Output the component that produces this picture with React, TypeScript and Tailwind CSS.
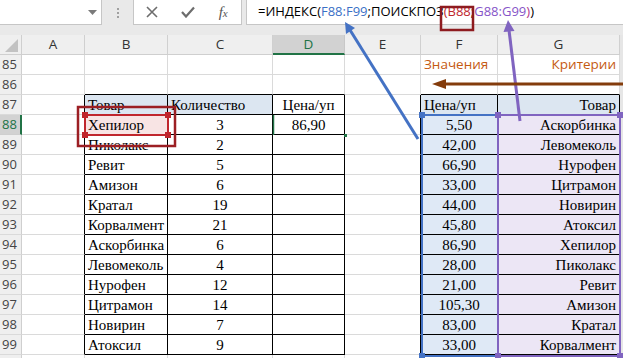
import React from "react";

const SERIF = "font-['Liberation_Serif','Times_New_Roman',serif]";
const SANS = "font-['Open_Sans','Noto_Sans',sans-serif]";

type Cell = { t?: string; a?: "l" | "c" | "r"; sans?: boolean; color?: string; bg?: string };

const B = ["Товар", "Хепилор", "Пиколакс", "Ревит", "Амизон", "Кратал", "Корвалмент", "Аскорбинка", "Левомеколь", "Нурофен", "Цитрамон", "Новирин", "Атоксил"];
const C = ["Количество", "3", "2", "5", "6", "19", "21", "6", "4", "12", "14", "7", "9"];
const F = ["Цена/уп", "5,50", "42,00", "66,90", "33,00", "44,00", "45,80", "86,90", "28,00", "21,00", "105,30", "83,00", "33,00"];
const G = ["Товар", "Аскорбинка", "Левомеколь", "Нурофен", "Цитрамон", "Новирин", "Атоксил", "Хепилор", "Пиколакс", "Ревит", "Амизон", "Кратал", "Корвалмент"];

function rowCells(r: number): Cell[] {
  const cells: Cell[] = Array.from({ length: 7 }, () => ({}));
  if (r === 85) {
    cells[5] = { t: "Значения", a: "l", sans: true, color: "o" };
    cells[6] = { t: "Критерии", a: "r", sans: true, color: "o" };
  }
  if (r >= 87 && r <= 99) {
    const i = r - 87;
    cells[1] = { t: B[i], a: "l", bg: i === 0 ? "h" : i === 1 ? "red" : undefined };
    cells[2] = { t: C[i], a: i === 0 ? "l" : "c", bg: i === 0 ? "h" : undefined };
    if (i === 0) cells[3] = { t: "Цена/уп", a: "c" };
    if (i === 1) cells[3] = { t: "86,90", a: "c" };
    cells[5] = { t: F[i], a: i === 0 ? "l" : "c", bg: i === 0 ? "h" : "blue" };
    cells[6] = { t: G[i], a: "r", bg: i === 0 ? "h" : "purple" };
  }
  return cells;
}

function bgClass(bg?: string) {
  if (bg === "h") return "bg-[#dce6f1]";
  if (bg === "red") return "bg-[#f8e4e4]";
  if (bg === "blue") return "bg-[#dfe9f6]";
  if (bg === "purple") return "bg-[#ece6f5]";
  return "bg-white";
}

function alignClass(a?: string) {
  if (a === "c") return "justify-center";
  if (a === "r") return "justify-end";
  return "justify-start";
}

function DataRow({ r }: { r: number }) {
  const cells = rowCells(r);
  const active = r === 88;
  return (
    <>
      <div
        className={
          active
            ? `h-[20px] border-b border-r-2 border-b-[#cfcfcf] border-r-[#217346] bg-[#d2d2d2] text-[#217346] ${SANS} text-[13px] flex items-center pl-[2px]`
            : `h-[20px] border-b border-r border-b-[#dadada] border-r-[#cfcfcf] bg-[#efefef] text-[#444] ${SANS} text-[13px] flex items-center pl-[2px]`
        }
      >
        {r < 100 ? r : ""}
      </div>
      {cells.map((c, ci) => {
        const inTableRows = r >= 87 && r <= 99;
        const rightBlack = inTableRows;
        const bottomBlack = r >= 86 && r <= 99 && (ci === 1 || ci === 2 || ci === 3 || ci === 5 || ci === 6);
        const cls = [
          "h-[20px] border-r border-b flex items-center px-[3px] overflow-hidden whitespace-nowrap",
          rightBlack ? "border-r-black" : "border-r-[#dadada]",
          bottomBlack ? "border-b-black" : "border-b-[#dadada]",
          bgClass(c.bg),
          alignClass(c.a),
          c.sans ? `${SANS} text-[13.5px] text-[#c55a11]` : `${SERIF} text-[15px] text-black`,
        ].join(" ");
        return (
          <div key={ci} className={cls}>
            <span className={c.sans ? "" : "pt-[2px]"}>{c.t}</span>
          </div>
        );
      })}
      <div className="h-[20px] bg-[#e6e6e6]" />
    </>
  );
}

export default function App() {
  const rows = Array.from({ length: 16 }, (_, i) => 85 + i);
  return (
    <div className="relative w-[623px] h-[358px] overflow-hidden bg-[#e9e9e9]">
      {/* formula bar */}
      <div className="h-[35px] flex items-start gap-0">
        <div className="relative w-[102px] h-[25px] bg-white border border-[#c6c6c6] border-l-0 border-t-0">
          <svg className="absolute left-[88px] top-[10px]" width="9" height="6" viewBox="0 0 9 6">
            <polygon points="0,0 9,0 4.5,5" fill="#7a7a7a" />
          </svg>
        </div>
        <div className="w-[31px] h-[25px] flex flex-col items-center justify-center gap-[2px]">
          <div className="w-[2px] h-[2px] bg-[#a0a0a0]" />
          <div className="w-[2px] h-[2px] bg-[#a0a0a0]" />
          <div className="w-[2px] h-[2px] bg-[#a0a0a0]" />
        </div>
        <div className="w-[109px] h-[25px] bg-white border border-[#c6c6c6] border-t-0 flex items-center">
          <div className="w-[36px] flex justify-center">
            <svg width="12" height="12" viewBox="0 0 12 12">
              <path d="M1 1 L11 11 M11 1 L1 11" stroke="#6d6d6d" strokeWidth="1.6" />
            </svg>
          </div>
          <div className="w-[36px] flex justify-center">
            <svg width="14" height="12" viewBox="0 0 14 12">
              <path d="M1 6 L5 10.5 L13 1.5" stroke="#6d6d6d" strokeWidth="2.2" fill="none" />
            </svg>
          </div>
          <div className="w-[36px] flex justify-center">
            <span className={`${SERIF} italic text-[15px] text-[#555] leading-none`}>
              f<span className="text-[11px]">x</span>
            </span>
          </div>
        </div>
        <div className="ml-[4px] flex-1 h-[25px] bg-white border border-[#c6c6c6] border-t-0 border-r-0 flex items-center pl-[11px]">
          <span className={`${SANS} text-[13px] text-black whitespace-nowrap`}>
            =ИНДЕКС(<span className="text-[#3a6fc6]">F88:F99</span>;ПОИСКПОЗ
            <span className="text-[#c0262d]">(B88</span>;
            <span className="text-[#8654c8]">G88:G99</span>
            <span className="text-[#b0368a]">)</span>)
          </span>
        </div>
      </div>

      {/* sheet */}
      <div className="grid grid-cols-[22px_63px_83px_105px_72px_76px_77px_122px_1fr]">
        <div className="h-[20px] bg-[#efefef] border-r border-b border-r-[#cfcfcf] border-b-[#cfcfcf] relative">
          <svg className="absolute left-[5px] top-[4px]" width="13" height="13" viewBox="0 0 13 13">
            <polygon points="13,0 13,13 0,13" fill="#c2c2c2" />
          </svg>
        </div>
        {["A", "B", "C", "D", "E", "F", "G"].map((l) =>
          l === "D" ? (
            <div
              key={l}
              className={`h-[20px] bg-[#d2d2d2] border-r border-b-2 border-r-[#c8c8c8] border-b-[#217346] flex items-center justify-center ${SANS} text-[13.5px] text-[#217346]`}
            >
              {l}
            </div>
          ) : (
            <div
              key={l}
              className={`h-[20px] bg-[#efefef] border-r border-b border-r-[#d0d0d0] border-b-[#cfcfcf] flex items-center justify-center ${SANS} text-[13.5px] text-[#333]`}
            >
              {l}
            </div>
          )
        )}
        <div className="h-[20px] bg-[#e6e6e6]" />
        {rows.map((r) => (
          <DataRow key={r} r={r} />
        ))}
      </div>

      {/* overlays: selection ranges, annotations and arrows */}
      <svg className="absolute inset-0 pointer-events-none" width="623" height="358" viewBox="0 0 623 358">
        <line x1="273.5" y1="115" x2="273.5" y2="135" stroke="#217346" strokeWidth="1.5" />
        <rect x="344" y="134" width="3" height="3" fill="#217346" />

        <rect x="422" y="115" width="76" height="241" fill="none" stroke="#4472c4" strokeWidth="2" />
        <rect x="498" y="115" width="122" height="241" fill="none" stroke="#8064c0" strokeWidth="2" />
        <rect x="419" y="112" width="6" height="6" fill="#4472c4" />
        <rect x="419" y="353" width="6" height="6" fill="#4472c4" />
        <rect x="495" y="112" width="6" height="6" fill="#8064c0" />
        <rect x="617" y="112" width="6" height="6" fill="#8064c0" />
        <rect x="495" y="353" width="6" height="6" fill="#8064c0" />
        <rect x="617" y="353" width="6" height="6" fill="#8064c0" />

        <rect x="85" y="115" width="83" height="20" fill="none" stroke="#c0262d" strokeWidth="2" />
        <rect x="82" y="112" width="6" height="6" fill="#c0262d" />
        <rect x="165" y="112" width="6" height="6" fill="#c0262d" />
        <rect x="82" y="132" width="6" height="6" fill="#c0262d" />
        <rect x="165" y="132" width="6" height="6" fill="#c0262d" />
        <rect x="78" y="107" width="97" height="39" fill="none" stroke="#9c1f24" strokeWidth="2.5" />
        <rect x="441" y="7" width="32" height="23" fill="none" stroke="#8e1b1f" strokeWidth="2.5" />

        <line x1="418" y1="139" x2="350" y2="30" stroke="#4472c4" strokeWidth="3" />
        <polygon points="345,22 355,28 346,34" fill="#4472c4" />
        <line x1="520" y1="121" x2="509" y2="30" stroke="#8064c0" strokeWidth="3" />
        <polygon points="508,20 514.5,31 503.5,32" fill="#8064c0" />
        <line x1="443" y1="84" x2="623" y2="84" stroke="#843c0c" strokeWidth="3" />
        <polygon points="432,84 446,79 446,89" fill="#843c0c" />
      </svg>
    </div>
  );
}
